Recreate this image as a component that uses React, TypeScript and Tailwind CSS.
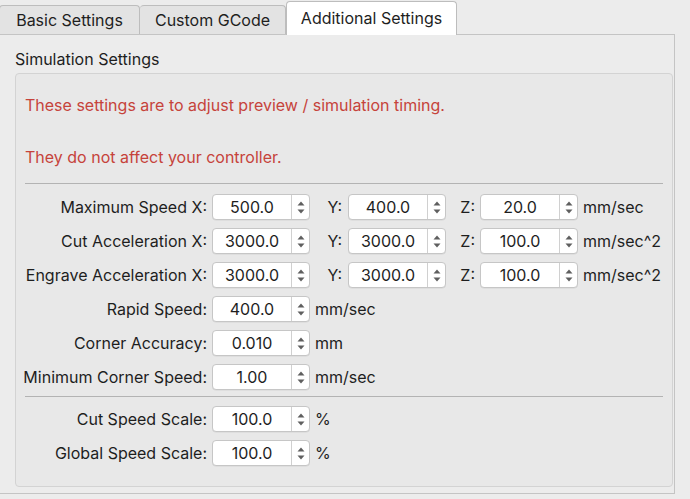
import React from "react";

type Row = {
  label: string;
  x: string;
  y?: string;
  z?: string;
  unit: string;
};

const axisRows: Row[] = [
  { label: "Maximum Speed X:", x: "500.0", y: "400.0", z: "20.0", unit: "mm/sec" },
  { label: "Cut Acceleration X:", x: "3000.0", y: "3000.0", z: "100.0", unit: "mm/sec^2" },
  { label: "Engrave Acceleration X:", x: "3000.0", y: "3000.0", z: "100.0", unit: "mm/sec^2" },
  { label: "Rapid Speed:", x: "400.0", unit: "mm/sec" },
  { label: "Corner Accuracy:", x: "0.010", unit: "mm" },
  { label: "Minimum Corner Speed:", x: "1.00", unit: "mm/sec" },
];

const scaleRows: Row[] = [
  { label: "Cut Speed Scale:", x: "100.0", unit: "%" },
  { label: "Global Speed Scale:", x: "100.0", unit: "%" },
];

function SpinBox({ value }: { value: string }) {
  return (
    <div className="flex h-[26px] w-[98px] shrink-0 rounded-[4px] border border-[#c6c6c6] bg-white shadow-[0_0.5px_0_rgba(0,0,0,0.08)]">
      <div className="flex flex-1 items-center justify-center text-[16px] text-[#1e1e1e]">{value}</div>
      <div className="flex w-[18px] flex-col items-center justify-center gap-[3px] border-l border-[#d0d0d0]">
        <svg width="8" height="5" viewBox="0 0 8 5">
          <path d="M4 0.5 L7.5 4.5 L0.5 4.5 Z" fill="#5f5f5f" />
        </svg>
        <svg width="8" height="5" viewBox="0 0 8 5">
          <path d="M0.5 0.5 L7.5 0.5 L4 4.5 Z" fill="#5f5f5f" />
        </svg>
      </div>
    </div>
  );
}

function SettingRow({ row }: { row: Row }) {
  return (
    <div className="flex h-[26px] items-center">
      <div className="w-[191px] shrink-0 text-right whitespace-nowrap">{row.label}</div>
      <div className="ml-[5px]">
        <SpinBox value={row.x} />
      </div>
      {row.y && (
        <>
          <div className="w-[38px] shrink-0 pr-[6px] text-right">Y:</div>
          <SpinBox value={row.y} />
        </>
      )}
      {row.z && (
        <>
          <div className="w-[34px] shrink-0 pr-[5px] text-right">Z:</div>
          <SpinBox value={row.z} />
        </>
      )}
      <div className="ml-[5px] whitespace-nowrap">{row.unit}</div>
    </div>
  );
}

export default function App() {
  const tabs = ["Basic Settings", "Custom GCode", "Additional Settings"];

  return (
    <div
      className="h-[499px] w-[690px] overflow-hidden bg-[#ececec] text-[16px] text-[#1e1e1e]"
      style={{ fontFamily: "Inter, 'Liberation Sans', sans-serif" }}
    >
      <div className="relative flex h-[34px] items-end">
        <div className="-ml-px flex h-[29px] w-[141px] items-center justify-center rounded-t-[4px] border border-b-0 border-[#bdbdbd] bg-[#e3e3e3]">
          {tabs[0]}
        </div>
        <div className="flex h-[29px] w-[146px] items-center justify-center rounded-t-[4px] border border-b-0 border-l-0 border-[#bdbdbd] bg-[#e3e3e3]">
          {tabs[1]}
        </div>
        <div className="relative z-10 -mb-px flex h-[34px] w-[171px] items-center justify-center rounded-t-[4px] border border-b-0 border-[#bdbdbd] bg-white pb-[1px]">
          {tabs[2]}
        </div>
      </div>

      <div className="-ml-px h-[460px] w-[676px] border border-[#c4c4c4] bg-[#ececec] pl-[15px] pr-px">
        <div className="flex h-[38px] items-center pt-[10px]">Simulation Settings</div>
        <div className="h-[414px] rounded-[4px] border border-[#d3d3d3] bg-[#e8e8e8]">
          <div className="px-[9px] pt-[21px] text-[#c6433b]">
            <p className="leading-[20px]">These settings are to adjust preview / simulation timing.</p>
            <p className="mt-[32px] leading-[20px]">They do not affect your controller.</p>
          </div>
          <div className="mx-[9px] mt-[16px] border-t border-[#b3b3b3]" />
          <div className="mt-[10px] flex flex-col gap-[8px]">
            {axisRows.map((r) => (
              <SettingRow key={r.label} row={r} />
            ))}
          </div>
          <div className="mx-[9px] mt-[6px] border-t border-[#b3b3b3]" />
          <div className="mt-[9px] flex flex-col gap-[8px]">
            {scaleRows.map((r) => (
              <SettingRow key={r.label} row={r} />
            ))}
          </div>
        </div>
      </div>
    </div>
  );
}
